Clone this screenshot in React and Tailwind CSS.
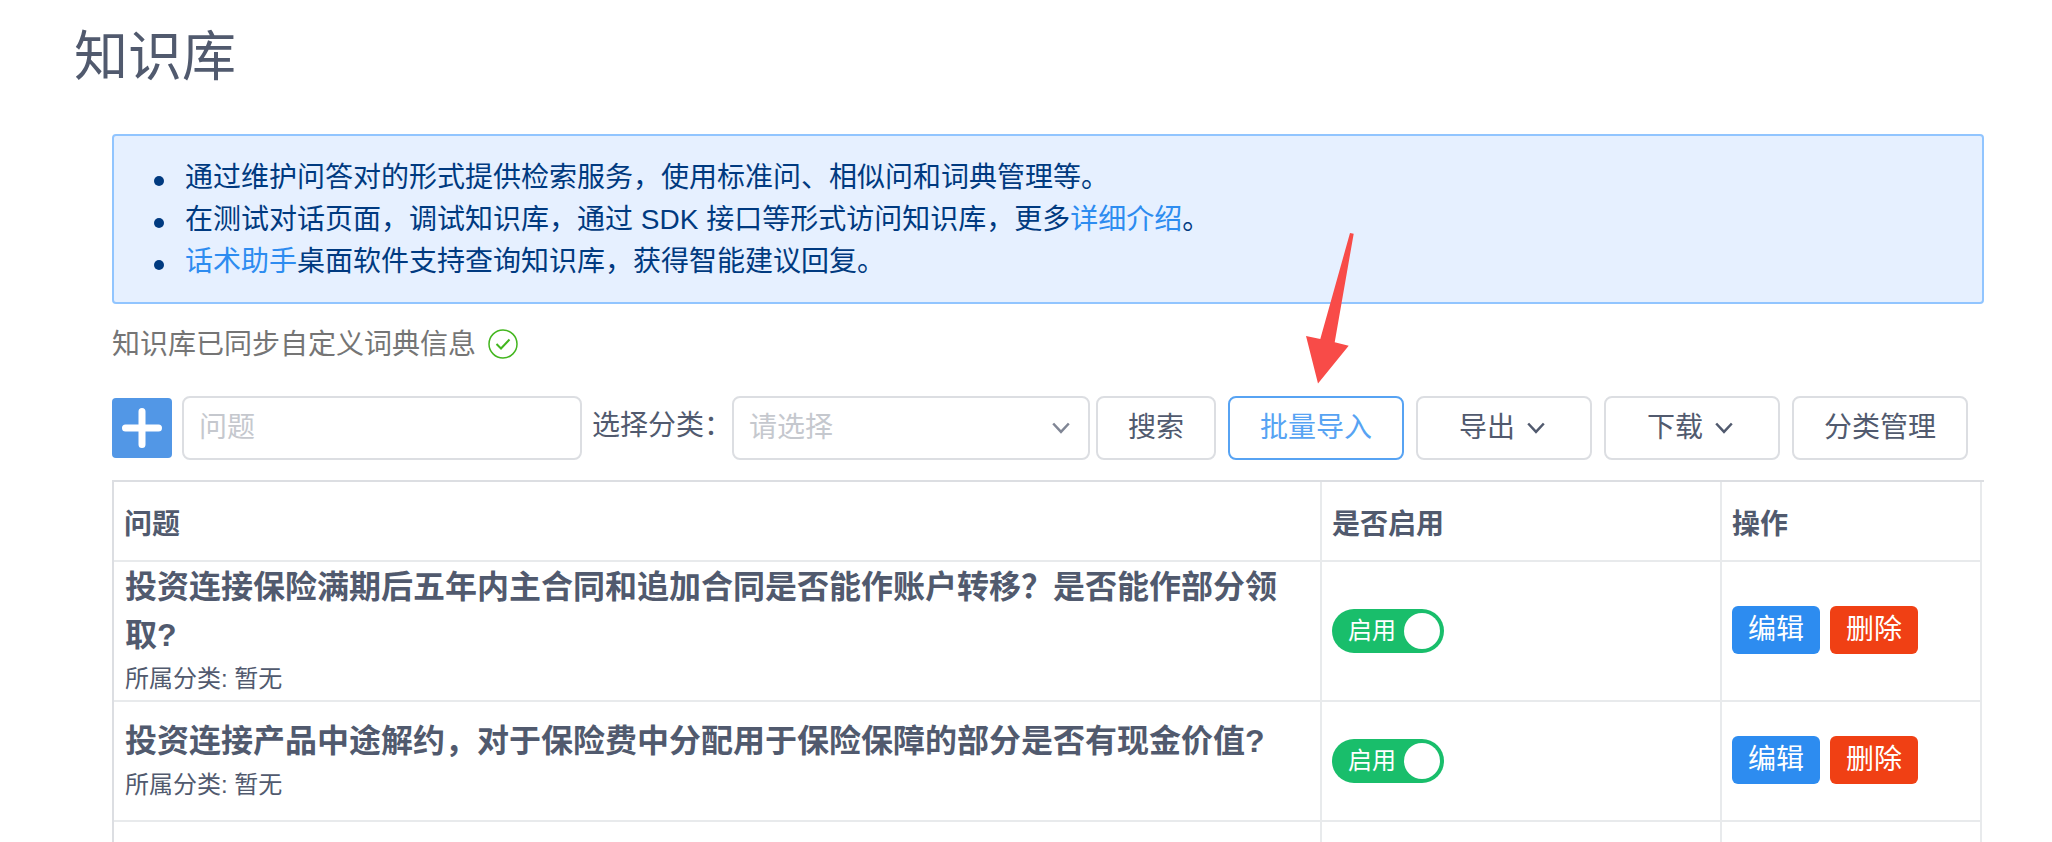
import { useState } from "react";

const CATEGORIES = [];

const INITIAL_ROWS = [
  {
    id: 1,
    question: "投资连接保险满期后五年内主合同和追加合同是否能作账户转移？是否能作部分领取?",
    category: "暂无",
    enabled: true,
  },
  {
    id: 2,
    question: "投资连接产品中途解约，对于保险费中分配用于保险保障的部分是否有现金价值?",
    category: "暂无",
    enabled: true,
  },
];

function Chevron() {
  return (
    <svg width="18" height="12" viewBox="0 0 18 12" fill="none" stroke="currentColor" strokeWidth="2.5" aria-hidden="true">
      <path d="M1.2 1.5 L9 9.8 L16.8 1.5" />
    </svg>
  );
}

function CheckCircle() {
  return (
    <svg width="30" height="30" viewBox="0 0 30 30" fill="none" stroke="#43b61f" aria-hidden="true">
      <circle cx="15" cy="15" r="14" strokeWidth="1.5" />
      <path d="M8.5 15 L13 19.5 L21.5 10.5" strokeWidth="2" />
    </svg>
  );
}

function Arrow() {
  return (
    <svg
      className="absolute bottom-full left-[78px] mb-3 pointer-events-none"
      width="48"
      height="151"
      viewBox="0 0 48 151"
      fill="#f84b48"
      aria-hidden="true"
    >
      <polygon points="44,0 47.7,0.7 28.7,109.3 42.7,112.7 12,150.5 0,103 14.3,106" />
    </svg>
  );
}

function ToolButton({ children, primary }) {
  return (
    <button
      type="button"
      className={`flex h-16 shrink-0 items-center justify-center rounded-lg border-2 bg-white ${
        primary ? "border-[#57a3f3] text-[#57a3f3]" : "border-[#dcdee2] text-[#515a6e]"
      }`}
    >
      {children}
    </button>
  );
}

function Switch({ checked, onChange, label }) {
  return (
    <label className="relative flex h-11 w-28 cursor-pointer items-center rounded-full bg-[#ccc] text-2xl text-white has-checked:bg-[#19be6b]">
      <input type="checkbox" aria-label={label} checked={checked} onChange={onChange} className="peer sr-only" />
      <span className="pl-4">{checked ? "启用" : "停用"}</span>
      <span className="absolute left-1 top-1 size-9 rounded-full bg-white peer-checked:left-[72px]" />
    </label>
  );
}

export default function App() {
  const [rows, setRows] = useState(INITIAL_ROWS);
  const [keyword, setKeyword] = useState("");

  function toggle(id) {
    setRows((previous) => previous.map((row) => (row.id === id ? { ...row, enabled: !row.enabled } : row)));
  }

  return (
    <div
      lang="zh-CN"
      className="h-screen overflow-hidden bg-white pl-[74px] pr-[68px] pt-4 font-['Liberation_Sans','Noto_Sans_CJK_SC',sans-serif] text-[28px] leading-[42px] text-[#515a6e]"
    >
      <h1 className="text-[54px] leading-[82px]">知识库</h1>

      <main className="ml-[38px] mt-9">
        <section className="rounded border-2 border-[#91c5ff] bg-[#e6f0ff] pb-[19px] pl-[71px] pr-8 pt-[21px] text-[#003a80]">
          <ul>
            {[
              <>通过维护问答对的形式提供检索服务，使用标准问、相似问和词典管理等。</>,
              <>
                在测试对话页面，调试知识库，通过 SDK 接口等形式访问知识库，更多
                <a href="#intro" className="text-[#2d8cf0]">详细介绍</a>。
              </>,
              <>
                <a href="#assistant" className="text-[#2d8cf0]">话术助手</a>桌面软件支持查询知识库，获得智能建议回复。
              </>,
            ].map((line, index) => (
              <li key={index} className="relative">
                <span className="absolute -left-[31px] top-[19px] size-[10px] rounded-full bg-[#003a80]" />
                {line}
              </li>
            ))}
          </ul>
        </section>

        <div className="mt-[18px] flex items-center gap-3 text-[#757575]">
          <span className="pt-[2px]">知识库已同步自定义词典信息</span>
          <CheckCircle />
        </div>

        <div className="mt-[30px] flex items-center">
          <button
            type="button"
            aria-label="新增"
            className="flex size-[60px] shrink-0 items-center justify-center rounded bg-[#5297e6]"
          >
            <svg width="42" height="42" viewBox="0 0 42 42" stroke="#fff" strokeWidth="7" strokeLinecap="round" aria-hidden="true">
              <path d="M21 4.5 V37.5 M4.5 21 H37.5" />
            </svg>
          </button>
          <input
            type="text"
            aria-label="问题"
            placeholder="问题"
            value={keyword}
            onChange={(e) => setKeyword(e.target.value)}
            className="ml-[10px] h-16 w-[400px] min-w-0 rounded-lg border-2 border-[#dcdee2] px-[15px] placeholder:text-[#c5c8ce]"
          />
          <label htmlFor="category" className="ml-[10px] shrink-0 pb-1">
            选择分类：
          </label>
          <div className="relative w-[358px] min-w-0">
            <select
              id="category"
              defaultValue=""
              className="h-16 w-full appearance-none rounded-lg border-2 border-[#dcdee2] bg-white px-[15px] text-[#c5c8ce]"
            >
              <option value="">请选择</option>
              {CATEGORIES.map((name) => (
                <option key={name}>{name}</option>
              ))}
            </select>
            <span className="pointer-events-none absolute inset-y-0 right-5 flex items-center text-[#808695]">
              <Chevron />
            </span>
          </div>
          <div className="ml-[6px] flex gap-3">
            <ToolButton>
              <span className="px-[30px]">搜索</span>
            </ToolButton>
            <div className="relative">
              <ToolButton primary>
                <span className="px-[30px]">批量导入</span>
              </ToolButton>
              <Arrow />
            </div>
            <ToolButton>
              <span className="flex w-[172px] items-center justify-center gap-3 pr-1">
                导出 <Chevron />
              </span>
            </ToolButton>
            <ToolButton>
              <span className="flex w-[172px] items-center justify-center gap-3 pr-1">
                下载 <Chevron />
              </span>
            </ToolButton>
            <ToolButton>
              <span className="px-[30px]">分类管理</span>
            </ToolButton>
          </div>
        </div>

        <div className="mt-5 border-l-2 border-t-2 border-[#dcdee2] pr-[2px]">
          <table className="w-full table-fixed border-separate border-spacing-0">
            <colgroup>
              <col />
              <col className="w-[400px]" />
              <col className="w-[260px]" />
            </colgroup>
            <thead>
              <tr>
                {["问题", "是否启用", "操作"].map((title) => (
                  <th
                    key={title}
                    className="h-20 border-b-2 border-r-2 border-[#e8eaec] px-[10px] pt-2 text-left font-bold"
                  >
                    {title}
                  </th>
                ))}
              </tr>
            </thead>
            <tbody>
              {rows.map((row) => (
                <tr key={row.id}>
                  <td className="h-[120px] border-b-2 border-r-2 border-[#e8eaec] px-[11px] py-px">
                    <div className="text-[32px] font-bold leading-[48px]">{row.question}</div>
                    <div className="text-2xl leading-10">所属分类: {row.category}</div>
                  </td>
                  <td className="border-b-2 border-r-2 border-[#e8eaec] px-[10px]">
                    <Switch checked={row.enabled} onChange={() => toggle(row.id)} label="是否启用" />
                  </td>
                  <td className="border-b-2 border-r-2 border-[#e8eaec] px-[10px] pb-[2px]">
                    <div className="flex gap-[10px] text-white">
                      <button type="button" className="h-12 w-[88px] rounded-md bg-[#2d8cf0]">
                        编辑
                      </button>
                      <button type="button" className="h-12 w-[88px] rounded-md bg-[#f04014]">
                        删除
                      </button>
                    </div>
                  </td>
                </tr>
              ))}
              <tr>
                <td className="h-[120px] border-r-2 border-[#e8eaec]" />
                <td className="border-r-2 border-[#e8eaec]" />
                <td className="border-r-2 border-[#e8eaec]" />
              </tr>
            </tbody>
          </table>
        </div>
      </main>
    </div>
  );
}
